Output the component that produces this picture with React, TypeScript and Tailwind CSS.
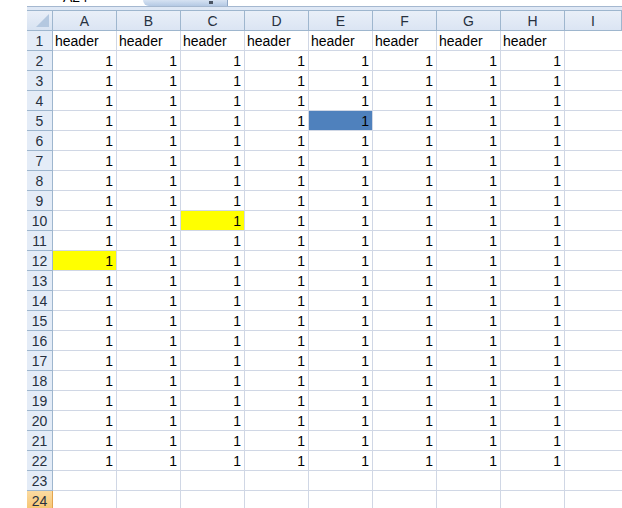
import React from "react";

const cols = ["A", "B", "C", "D", "E", "F", "G", "H"];

function cellBg(r: number, c: number): string {
  if (r === 5 && c === 4) return "bg-[#4f81bd]";
  if (r === 10 && c === 2) return "bg-[#ffff00]";
  if (r === 12 && c === 0) return "bg-[#ffff00]";
  return "bg-white";
}

export default function App() {
  const rows = Array.from({ length: 24 }, (_, i) => i + 1);
  return (
    <div
      className="w-[622px] h-[508px] overflow-hidden bg-white flex"
      style={{ fontFamily: '"Liberation Sans", Arial, sans-serif' }}
    >
      <div className="w-[27px] shrink-0 bg-white" />
      <div className="flex-1 flex flex-col min-w-0">
        {/* formula bar remnant */}
        <div className="h-[10px] flex flex-col shrink-0">
          <div className="h-[7px] flex border-b border-[#a5b8d0] overflow-hidden">
            <div className="w-[116px] relative bg-white overflow-hidden">
              <span className="absolute left-[36px] top-[-11px] text-[14px] leading-[16px] text-black">A24</span>
            </div>
            <div className="w-[85px] rounded-bl-[14px] bg-gradient-to-b from-[#d6e2f2] to-[#b4c9e4] border-r border-[#8fa7c6] relative">
              <span className="absolute right-[14px] top-[1px] w-[4px] h-[3px] bg-[#4b5563]" />
            </div>
            <div className="flex-1 bg-white" />
          </div>
          <div className="flex-1 bg-[#dfe8f5]" />
        </div>
        {/* grid */}
        <div className="grid grid-cols-[26px_repeat(8,64px)_1fr] text-[14px]">
          {/* header row */}
          <div className="h-[21px] border-t border-b border-r border-[#9eb6ce] bg-gradient-to-b from-[#e9eff8] to-[#d8e3f2] relative overflow-hidden">
            <svg className="absolute right-[3px] bottom-[3px]" width="13" height="13" viewBox="0 0 13 13">
              <polygon points="13,0 13,13 0,13" fill="#b4c8e0" />
            </svg>
          </div>
          {[...cols, "I"].map((c) => (
            <div
              key={c}
              className="h-[21px] border-t border-b border-r border-[#9eb6ce] bg-gradient-to-b from-[#e9eff8] to-[#dbe5f3] flex items-center justify-center text-[#27313f] leading-none"
            >
              {c}
            </div>
          ))}
          {rows.map((r) => (
            <React.Fragment key={r}>
              <div
                className={
                  "h-[20px] border-b border-r flex items-center justify-center leading-none " +
                  (r === 24
                    ? "bg-gradient-to-b from-[#fbdba1] to-[#f6c46f] border-[#e3a54f] text-[#27313f]"
                    : "bg-[#e4ecf7] border-[#9eb6ce] text-[#27313f]")
                }
              >
                {r}
              </div>
              {cols.map((c, ci) => (
                <div
                  key={c}
                  className={
                    "h-[20px] border-b border-r border-[#d0d7e5] flex items-center leading-none text-black " +
                    cellBg(r, ci) +
                    (r === 1 ? " justify-start pl-[2px]" : " justify-end pr-[3px]")
                  }
                >
                  {r === 1 ? "header" : r <= 22 ? "1" : ""}
                </div>
              ))}
              <div className="h-[20px] border-b border-[#d0d7e5] bg-white" />
            </React.Fragment>
          ))}
        </div>
      </div>
    </div>
  );
}
